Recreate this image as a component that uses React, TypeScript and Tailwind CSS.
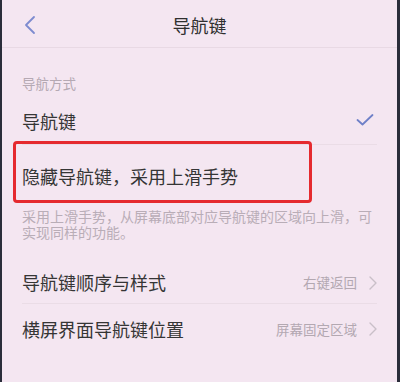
import React from 'react';

const font = { fontFamily: '"Noto Sans CJK SC", "Noto Sans", sans-serif' };

const Chevron = () => (
  <svg width="8" height="14" viewBox="0 0 8 14" className="ml-[12px]">
    <path d="M1 1l6 6-6 6" fill="none" stroke="#c9bfc8" strokeWidth="1.4" strokeLinecap="round" strokeLinejoin="round" />
  </svg>
);

export default function App() {
  return (
    <div className="w-[400px] h-[382px] bg-[#f4e6f1] flex overflow-hidden" style={font}>
      <div className="w-[2px] bg-[#2a2d3a]" />
      <div className="flex-1 flex flex-col relative">
        {/* header */}
        <div className="h-[48px] flex items-center justify-center relative border-b border-[#e8d9e4]">
          <svg width="14" height="20" viewBox="0 0 14 20" className="absolute left-[21px] top-[15px]">
            <path d="M11 2L3 10l8 8" fill="none" stroke="#7d8bcf" strokeWidth="1.8" strokeLinecap="round" strokeLinejoin="round" />
          </svg>
          <span className="text-[18px] text-[#2f2f2f] leading-none mt-[2px]">导航键</span>
        </div>

        <div className="pl-[20px] pr-[20px] pt-[25px] text-[13.5px] leading-[20px] text-[#b5a9b3]">导航方式</div>

        <div className="mx-[20px] h-[46px] flex items-center justify-between border-b border-[#eadce6] mt-[6px]">
          <span className="text-[18px] text-[#353535]">导航键</span>
          <svg width="18" height="12" viewBox="0 0 18 12" className="mr-[3px] mt-[-4px]">
            <path d="M1.5 6l5 4.5L16.5 1" fill="none" stroke="#6f80c8" strokeWidth="1.8" strokeLinecap="round" strokeLinejoin="round" />
          </svg>
        </div>

        <div className="mx-[20px] h-[56px] mt-[3px] flex items-center">
          <span className="text-[18px] text-[#353535]">隐藏导航键，采用上滑手势</span>
        </div>

        <div className="mx-[20px] text-[14px] leading-[16px] text-[#b9adb7] pt-[4px]">
          采用上滑手势，从屏幕底部对应导航键的区域向上滑，可实现同样的功能。
        </div>

        <div className="mx-[20px] h-[42px] mt-[22px] flex items-center justify-between border-b border-[#eadce6]">
          <span className="text-[18px] text-[#353535]">导航键顺序与样式</span>
          <span className="flex items-center text-[13.5px] text-[#b3a8b1]">
            右键返回
            <Chevron />
          </span>
        </div>

        <div className="mx-[20px] h-[50px] flex items-center justify-between">
          <span className="text-[18px] text-[#353535]">横屏界面导航键位置</span>
          <span className="flex items-center text-[13.5px] text-[#b3a8b1]">
            屏幕固定区域
            <Chevron />
          </span>
        </div>

        {/* red annotation box */}
        <div className="absolute left-[11px] top-[141px] w-[299px] h-[62px] border-[3px] border-[#e52a2f] rounded-[4px]" />
      </div>
      <div className="w-[3px] bg-[#2a2d3a]" />
    </div>
  );
}
